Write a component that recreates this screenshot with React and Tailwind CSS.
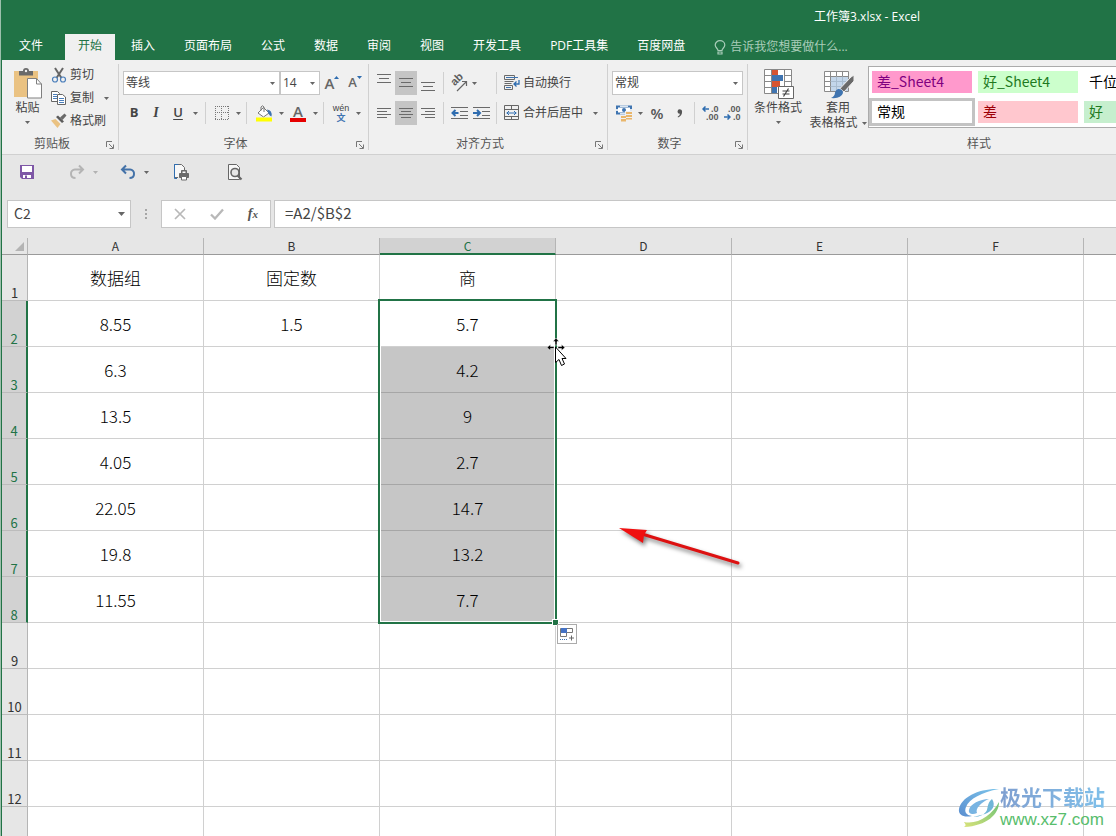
import React from 'react';

/* ---------- small shared parts ---------- */

function Caret({ className = '' }) {
  return (
    <svg className={'shrink-0 ' + className} width="5" height="3" viewBox="0 0 5 3" aria-hidden="true">
      <path d="M0 0h5L2.5 3z" fill="#666" />
    </svg>
  );
}

function CaretButton({ label }) {
  return (
    <button aria-label={label} className="flex h-6 w-2 shrink-0 items-center justify-center">
      <Caret />
    </button>
  );
}

function Tool({ label, className = 'w-[22px]', children }) {
  return (
    <button aria-label={label} className={'flex h-6 shrink-0 items-center justify-center ' + className}>
      {children}
    </button>
  );
}

function Divider() {
  return <span className="mx-1 h-[22px] w-px shrink-0 bg-[#d0d0d0]" />;
}

function Group({ title, launcher = true, className = '', children }) {
  return (
    <section className={'flex shrink-0 flex-col ' + className}>
      <div className="h-[72px]">{children}</div>
      <div className="flex h-[14px] items-center">
        <h2 className="flex-1 pt-[2px] text-center text-xs leading-[14px] text-[#555]">{title}</h2>
        <span className="flex w-4 justify-center pt-1">
          {launcher && (
            <button aria-label={title + '设置'}>
              <svg width="8" height="8" viewBox="0 0 8 8" fill="none" stroke="#777">
                <path d="M.5 6V.5H6M3 3l4 4M7.500 3.500V7.500H3.500" />
              </svg>
            </button>
          )}
        </span>
      </div>
    </section>
  );
}

function Picker({ label, value, className = '' }) {
  return (
    <label className={'relative flex h-6 items-center ' + className}>
      <select
        aria-label={label}
        className="h-6 w-full appearance-none border border-[#c6c6c6] bg-white pl-[2px] text-xs text-[#444] outline-none"
      >
        <option>{value}</option>
      </select>
      <Caret className="pointer-events-none absolute right-[5px]" />
    </label>
  );
}

/* ---------- icons ---------- */

const PasteIcon = () => (
  <svg width="30" height="31" viewBox="0 0 30 31">
    <path d="M1 3h24v26H1z" fill="#EAC282" />
    <path d="M6 3h4a3 3 0 0 1 6 0h4v4.500H6z" fill="#6a6a6a" />
    <circle cx="13" cy="3" r="1.200" fill="#f0f0f0" />
    <path d="M14.500 10.500h9l5 5.500v14h-14z" fill="#fff" stroke="#808080" />
    <path d="M23.500 10.500v5.500h5" fill="none" stroke="#808080" />
  </svg>
);

const CutIcon = () => (
  <svg width="16" height="16" viewBox="0 0 16 16" fill="none">
    <path d="M4 1l6.500 10M12 1L5.500 11" stroke="#666" strokeWidth="2" />
    <circle cx="4" cy="12.500" r="2.500" stroke="#4a7ebb" strokeWidth="1.200" />
    <circle cx="12" cy="12.500" r="2.500" stroke="#4a7ebb" strokeWidth="1.200" />
  </svg>
);

const CopyIcon = () => (
  <svg width="16" height="16" viewBox="0 0 16 16" fill="#fff" stroke="#666">
    <path d="M.5 1.500h6l2 2v8h-8z" />
    <path d="M2 4.500h4M2 6.500h4M2 8.500h4" stroke="#4a7ebb" />
    <path d="M6.500 4.500h5l3 2.500v7.500H6.500z" />
    <path d="M8 8.500h5M8 10.500h5M8 12.500h5" stroke="#4a7ebb" />
  </svg>
);

const PainterIcon = () => (
  <svg width="16" height="16" viewBox="0 0 16 16">
    <path d="M0 7.500l4.500-1.500 5 5L6.500 15z" fill="#EAC282" />
    <path d="M5 4l2-1.500 6 6-2 1.500z" fill="#5c5c5c" />
    <path d="M9 4.500l4.500-4 2 2-4 4.500z" fill="#6a6a6a" />
  </svg>
);

const BorderIcon = () => (
  <svg width="14" height="14" viewBox="0 0 14 14" stroke="#777" strokeDasharray="1 1">
    <path d="M0 .5h14M0 6.500h14M0 13.500h14M.5 0v14M6.500 0v14M13.500 0v14" />
  </svg>
);

const BucketIcon = () => (
  <svg width="18" height="17" viewBox="0 0 18 17" fill="none">
    <path d="M3 8l5.500-5.500L14 8l-5.500 4z" fill="#fff" stroke="#777" />
    <path d="M6 5.500V2Q7.500-.5 9 2v5" stroke="#777" />
    <path d="M12 4.500q5.500.5 4.500 7Q13.500 10.500 12 4.500z" fill="#3f74b0" />
    <path d="M1 12.500h16v4H1z" fill="#ffff00" />
  </svg>
);

function LinesIcon({ rows, y }) {
  return (
    <svg width="14" height="22" viewBox="0 0 14 22" stroke="#6a6a6a">
      {rows.map(([a, b], i) => (
        <path key={i} d={`M${a} ${y + i * (rows.length === 3 ? 4 : 3)}.5H${b}`} />
      ))}
    </svg>
  );
}

function OrientationIcon() {
  return (
    <span className="relative flex h-[18px] w-[18px] items-center">
      <span className="-mt-2 -rotate-45 font-['Liberation_Sans',sans-serif] text-[11px] leading-3 font-bold text-[#5c5c5c]">ab</span>
      <svg className="absolute right-0 bottom-0" width="12" height="12" viewBox="0 0 12 12" fill="none" stroke="#666">
        <path d="M1 11l9.500-9.500M6 1.500h4.500V6" strokeWidth="1.200" />
      </svg>
    </span>
  );
}

function IndentIcon({ out }) {
  return (
    <svg width="17" height="14" viewBox="0 0 17 14" fill="none">
      <path d="M0 1.500h17M9 5.500h8M9 9.500h8M0 12.500h17" stroke="#6a6a6a" />
      <path
        d={out ? 'M7.500 7H2M4.500 4L1.500 7l3 3' : 'M0 7h6M4 4l3 3-3 3'}
        stroke="#2f6db0"
        strokeWidth="2"
      />
    </svg>
  );
}

const WrapIcon = () => (
  <svg width="16" height="16" viewBox="0 0 16 16" fill="none">
    <path d="M.5.5h10v4H.5zM.5 6.500h9M.5 8.500h7M.5 10.500h8v4h-8z" stroke="#6a6a6a" />
    <path d="M2 2.500h12M2 12.500h5" stroke="#3f74b0" />
    <path d="M15 5v4H10.500M12.500 6.500L10 9l2.500 2.500" stroke="#2f6db0" strokeWidth="1.300" />
  </svg>
);

const MergeIcon = () => (
  <svg width="16" height="16" viewBox="0 0 16 16" fill="none">
    <path d="M.5.5h14v14H.5zM.5 4.500h14M.5 11.500h14M7.500.5v4M7.500 11.500v3" stroke="#666" />
    <path d="M2.500 8h10M5 6L3 8l2 2M10 6l2 2-2 2" stroke="#2f6db0" />
  </svg>
);

const CurrencyIcon = () => (
  <svg width="17" height="17" viewBox="0 0 17 17">
    <path d="M1 1.500h14v7H1z" fill="#fff" stroke="#3f74b0" strokeWidth="2" />
    <path d="M4 .5h8v1.500H4zM4 8h8v1.500H4zM0 4h2v2H0zM14 4h2v2h-2z" fill="#dbe6f2" />
    <circle cx="8" cy="5" r="2" fill="#3f74b0" />
    <path d="M9 6h8v9H9zM4 10h7v7H4z" fill="#f0f0f0" />
    <path d="M10 7h6v2h-6zM10 10h6v2h-6zM10 13h6v1.500h-6zM5 11h5v2H5zM5 14h5v2.500H5z" fill="#E9B66B" />
  </svg>
);

function DecimalIcon({ add }) {
  const arrow = (
    <svg width="7" height="6" viewBox="0 0 7 6" fill="none" stroke="#2f6db0" strokeWidth="1.500" aria-hidden="true">
      <path d={add ? 'M7 3H1M3.500.5L1 3l2.500 2.500' : 'M0 3h6M3.500.5L6 3 3.500 5.500'} />
    </svg>
  );
  return (
    <span className="flex w-[17px] flex-col items-end font-['Liberation_Sans',sans-serif] text-[9px] leading-[8px] font-bold text-[#5c5c5c]">
      <span className="flex items-center gap-[2px]">{add && arrow}{add ? '.0' : '.00'}</span>
      <span className="flex items-center gap-[2px]">{!add && arrow}{add ? '.00' : '.0'}</span>
    </span>
  );
}

const ConditionalIcon = () => (
  <svg width="31" height="31" viewBox="0 0 31 31" fill="none">
    <path d="M1.500 1.500h27v24h-27z" fill="#fff" />
    <path d="M9 1h6v6H9z" fill="#D65532" />
    <path d="M9 7h11v6H9z" fill="#3f74b0" />
    <path d="M9 13h8v6H9z" fill="#D65532" />
    <path d="M9 19h5v6H9z" fill="#3f74b0" />
    <path d="M1.500 1.500h27v24h-27zM1.500 7.500h7M21 7.500h7M1.500 13.500h7M21 13.500h7M1.500 19.500h7M8.500 1.500v24M21.500 1.500v24" stroke="#888" />
    <path d="M15.500 18.500h15v12h-15z" fill="#fff" stroke="#666" />
    <path d="M19.500 23h7M19.500 26h7M25.500 20.500l-5 8" stroke="#444" strokeWidth="1.200" />
  </svg>
);

const TableFormatIcon = () => (
  <svg width="31" height="31" viewBox="0 0 31 31" fill="none">
    <path d="M1.500 3.500h24v20h-24z" fill="#fff" />
    <path d="M7 8h19v15H7z" fill="#C3D6EA" />
    <path d="M1.500 3.500h24v20h-24zM1.500 8.500h24M1.500 13.500h7M1.500 18.500h7M7.500 3.500v20M13.500 3.500v5M19.500 3.500v5" stroke="#8a8a8a" />
    <path d="M13.500 8.500v15M19.500 8.500v15M7.500 13.500h18M7.500 18.500h18" stroke="#a9bccf" />
    <path d="M31 7v6L21 24l-4-3.500L28 9z" fill="#6a6a6a" stroke="#f0f0f0" />
    <path d="M15 21q5 0 5 4-2 6-12 5 4-2 4-5.500 1-3 3-3.500z" fill="#3f74b0" />
  </svg>
);

const SaveIcon = () => (
  <svg width="16" height="16" viewBox="0 0 16 16">
    <path d="M1 1h14v14H3l-2-2z" fill="#7E57A6" />
    <path d="M3 2h10v6H3zM4 11h8v3H4z" fill="#fff" />
    <path d="M6 11.500h2v2.500H6z" fill="#7E57A6" />
  </svg>
);

function TurnIcon({ color, flip }) {
  return (
    <svg width="16" height="16" viewBox="0 0 16 16" fill="none" stroke={color} strokeWidth="2">
      <g transform={flip ? 'matrix(-1 0 0 1 16 0)' : undefined}>
        <path d="M2 5.500h8a4 4 0 0 1 4 4.500c0 2.500-2 4-4.500 4M6 1.500l-4 4 4 4" />
      </g>
    </svg>
  );
}

const QuickPrintIcon = () => (
  <svg width="17" height="17" viewBox="0 0 17 17" fill="none" stroke="#6a6a6a">
    <path d="M5 13.500H1.500V.5h7l3 3V7" fill="#f7f7f7" />
    <path d="M4 14.500H1.500V.5h4" stroke="#2f6db0" />
    <path d="M8.500 9V6.500h5V9M6.500 9.500h9v4h-9z" fill="#6a6a6a" />
    <path d="M8.500 12.500h5v3.500h-5z" fill="#fff" />
    <path d="M9.500 7.500h3V9h-3z" fill="#fff" stroke="none" />
  </svg>
);

const PreviewIcon = () => (
  <svg width="16" height="17" viewBox="0 0 16 17" fill="none" stroke="#666">
    <path d="M1.500.5h8l3 3V15.500h-11z" fill="#f7f7f7" />
    <circle cx="8" cy="8.500" r="4" strokeWidth="1.600" fill="#e6e6e6" />
    <path d="M10.500 11.500l4 4" strokeWidth="2.200" />
  </svg>
);

const BulbIcon = () => (
  <svg width="12" height="15" viewBox="0 0 12 15" fill="none" stroke="#a9cdb9" strokeWidth="1.200">
    <path d="M4 10.500c0-2-2.800-2.700-2.800-5.500a4.800 4.300 0 0 1 9.600 0c0 2.800-2.800 3.500-2.800 5.500zM4 12h4v2H4z" />
  </svg>
);

const WatermarkLogo = () => (
  <svg width="42" height="40" viewBox="0 0 42 40">
    <defs>
      <linearGradient id="sky" x1="0" y1="1" x2="1" y2="0">
        <stop offset="0" stopColor="#5b8fd0" />
        <stop offset="1" stopColor="#7cc4ea" />
      </linearGradient>
      <linearGradient id="leaf" x1="0" y1="1" x2="1" y2="0">
        <stop offset="0" stopColor="#d9e27a" />
        <stop offset="1" stopColor="#6cc276" />
      </linearGradient>
    </defs>
    <path d="M41 1C22 0 3 9 1 21c-1 6 5 9 13 7-6-1-8-4-6-9C11 11 24 4 41 1z" fill="url(#sky)" />
    <path d="M31 11c-9 0-19 5-20 11-1 4 4 5 8 3-2-4 4-11 12-14z" fill="#78b4e2" />
    <path d="M34 11c4 6 1 12-7 15l-12 3c8 0 12-3 14-7 1-4 1-8 5-11z" fill="#6fb6d8" />
    <path d="M41 14c0 12-12 24-35 25 3-2 1-3 0-5 14 3 28-7 35-20z" fill="url(#leaf)" />
  </svg>
);

/* ---------- ribbon ---------- */

const TABS = ['插入', '页面布局', '公式', '数据', '审阅', '视图', '开发工具', 'PDF工具集', '百度网盘'];

function TitleBar() {
  return (
    <header className="bg-[#217346] text-xs text-white">
      <div className="flex h-[34px] items-center justify-end pr-[196px]">
        <h1 className="leading-4">工作簿3.xlsx - Excel</h1>
      </div>
      <nav className="flex h-[26px] gap-[3px] whitespace-nowrap">
        <button className="w-[60px] pr-[2px] pb-[2px]">文件</button>
        <button className="bg-[#f0f0f0] px-[13px] pb-[2px] text-[#217346]">开始</button>
        {TABS.map((t) => (
          <button key={t} className="px-[13px] pb-[2px]">{t}</button>
        ))}
        <button className="flex items-center gap-1 pl-[13px] text-[#a9cdb9]">
          <BulbIcon />
          告诉我您想要做什么...
        </button>
      </nav>
    </header>
  );
}

const SPREAD = [[0, 14], [2, 12], [0, 14]];

function Ribbon() {
  return (
    <div className="flex overflow-hidden border-b border-[#d0d0d0] bg-[#f0f0f0] py-1 text-xs whitespace-nowrap text-[#444]">
      <Group title="剪贴板" className="w-[117px] border-r border-[#d0d0d0]">
        <div className="flex">
          <button className="flex w-[49px] flex-col items-center pt-[4px] pl-[2px]">
            <PasteIcon />
            <span className="leading-[18px]">粘贴</span>
            <Caret className="mt-1" />
          </button>
          <div className="flex flex-col">
            <button className="flex h-[22px] items-center gap-[3px]"><CutIcon />剪切</button>
            <div className="flex h-6 items-center">
              <button className="flex items-center gap-[3px]"><CopyIcon />复制</button>
              <button aria-label="复制选项" className="ml-2 flex w-2 justify-center"><Caret /></button>
            </div>
            <button className="flex h-[22px] items-center gap-[3px]"><PainterIcon />格式刷</button>
          </div>
        </div>
      </Group>

      <Group title="字体" className="w-[250px] border-r border-[#d0d0d0]">
        <div className="flex flex-col gap-[6px] pt-[7px] pl-1">
          <div className="flex items-center">
            <Picker label="字体名称" value="等线" className="w-[157px]" />
            <Picker label="字号" value="14" className="w-10" />
            <Tool label="增大字号" className="w-6">
              <span className="text-[15px] font-semibold text-[#666]">A</span>
              <svg className="mb-3" width="5" height="3" viewBox="0 0 5 3"><path d="M0 3h5L2.500 0z" fill="#2f6db0" /></svg>
            </Tool>
            <Tool label="减小字号">
              <span className="text-[13px] font-semibold text-[#666]">A</span>
              <svg className="mb-3" width="5" height="3" viewBox="0 0 5 3"><path d="M0 0h5L2.500 3z" fill="#2f6db0" /></svg>
            </Tool>
          </div>
          <div className="flex items-center">
            <Tool label="加粗"><b className="text-[13px]">B</b></Tool>
            <Tool label="倾斜"><i className="font-['Liberation_Serif',serif] text-sm font-bold">I</i></Tool>
            <Tool label="下划线"><span className="text-[13px] font-semibold underline underline-offset-2">U</span></Tool>
            <button aria-label="下划线选项" className="flex h-6 w-3 items-center justify-center"><Caret /></button>
            <Divider />
            <Tool label="边框" className="w-6"><BorderIcon /></Tool>
            <CaretButton label="边框选项" />
            <Divider />
            <Tool label="填充颜色" className="w-[26px]"><BucketIcon /></Tool>
            <CaretButton label="填充颜色选项" />
            <Tool label="字体颜色" className="w-[26px]">
              <span className="w-4 border-b-4 border-[#e60000] text-[15px] leading-[13px] font-semibold text-[#666]">A</span>
            </Tool>
            <CaretButton label="字体颜色选项" />
            <Divider />
            <Tool label="拼音" className="w-[26px] flex-col">
              <span className="font-['Liberation_Sans',sans-serif] text-[9px] leading-[9px]">wén</span>
              <span className="text-[9px] leading-[10px] font-bold text-[#3f74b0]">文</span>
            </Tool>
            <CaretButton label="拼音选项" />
          </div>
        </div>
      </Group>

      <Group title="对齐方式" className="w-[239px] border-r border-[#d0d0d0]">
        <div className="flex flex-col gap-[6px] pt-[7px] pl-1">
          <div className="flex items-center">
            <Tool label="顶端对齐"><LinesIcon y={2} rows={SPREAD} /></Tool>
            <Tool label="垂直居中" className="w-[22px] bg-[#c5c5c5]"><LinesIcon y={6} rows={SPREAD} /></Tool>
            <Tool label="底端对齐"><LinesIcon y={10} rows={SPREAD} /></Tool>
            <Divider />
            <div className="flex w-11">
              <Tool label="方向"><OrientationIcon /></Tool>
              <CaretButton label="方向选项" />
            </div>
            <Divider />
            <button className="flex items-center gap-[3px] pl-[3px]"><WrapIcon />自动换行</button>
          </div>
          <div className="flex items-center">
            <Tool label="左对齐"><LinesIcon y={6} rows={[[0, 14], [0, 10], [0, 14], [0, 10]]} /></Tool>
            <Tool label="居中" className="w-[22px] bg-[#c5c5c5]"><LinesIcon y={6} rows={[[0, 14], [2, 12], [0, 14], [2, 12]]} /></Tool>
            <Tool label="右对齐"><LinesIcon y={6} rows={[[0, 14], [4, 14], [0, 14], [4, 14]]} /></Tool>
            <Divider />
            <Tool label="减少缩进量"><IndentIcon out /></Tool>
            <Tool label="增加缩进量"><IndentIcon /></Tool>
            <Divider />
            <button className="flex items-center gap-[3px] pr-2 pl-[3px]"><MergeIcon />合并后居中</button>
            <CaretButton label="合并选项" />
          </div>
        </div>
      </Group>

      <Group title="数字" className="w-[140px] border-r border-[#d0d0d0]">
        <div className="flex flex-col gap-[6px] pt-[7px] pl-1">
          <Picker label="数字格式" value="常规" className="w-[131px]" />
          <div className="flex items-center">
            <Tool label="会计数字格式" className="w-6"><CurrencyIcon /></Tool>
            <CaretButton label="会计格式选项" />
            <Tool label="百分比样式" className="w-[26px]"><span className="text-[15px] font-semibold text-[#555]">%</span></Tool>
            <Tool label="千位分隔样式" className="w-5">
              <svg width="6" height="9" viewBox="0 0 6 9"><path d="M.5 2.500a2.200 2.200 0 1 1 4.600.3Q5 7 1 8.500l-.3-.8Q3 6.500 3 4.800.5 5 .5 2.500z" fill="#555" /></svg>
            </Tool>
            <Divider />
            <Tool label="增加小数位数"><DecimalIcon add /></Tool>
            <Tool label="减少小数位数"><DecimalIcon /></Tool>
          </div>
        </div>
      </Group>

      <Group title="样式" launcher={false} className="min-w-[478px] flex-1">
        <div className="flex">
          <button className="flex w-[60px] flex-col items-center pt-[4px]">
            <ConditionalIcon />
            <span className="leading-[18px]">条件格式</span>
            <Caret className="mt-1" />
          </button>
          <button className="flex w-[60px] flex-col items-center pt-[4px]">
            <TableFormatIcon />
            <span className="leading-[18px]">套用</span>
            <span className="flex items-center gap-1 leading-3">表格格式<Caret /></span>
          </button>
          <div className="mt-[2px] grid h-[62px] flex-1 auto-cols-[106px] grid-flow-col grid-rows-2 overflow-hidden border border-[#ababab] bg-white font-['Noto_Sans_CJK_SC',sans-serif] text-sm">
            <StyleSwatch className="bg-[#ff99cc] text-[#800080]">差_Sheet4</StyleSwatch>
            <button className="my-[1px] flex items-center border-[3px] border-[#c3c3c3] bg-white pb-[2px] pl-[5px] text-black">常规</button>
            <StyleSwatch className="bg-[#ccffcc] text-[#1f7a1f]">好_Sheet4</StyleSwatch>
            <StyleSwatch className="bg-[#ffc7ce] text-[#9c0006]">差</StyleSwatch>
            <StyleSwatch className="text-black">千位分隔</StyleSwatch>
            <StyleSwatch className="bg-[#c6efce] text-[#1f7a1f]">好</StyleSwatch>
          </div>
        </div>
      </Group>
    </div>
  );
}

function StyleSwatch({ className, children }) {
  return <button className={'mx-[3px] my-1 flex items-center overflow-hidden pb-[2px] pl-[5px] ' + className}>{children}</button>;
}

function QuickAccess() {
  return (
    <div className="flex h-[34px] items-center pl-[17px]">
      <button aria-label="保存"><SaveIcon /></button>
      <button aria-label="恢复" className="ml-[34px]"><TurnIcon color="#b4b4b4" flip /></button>
      <button aria-label="恢复选项" className="ml-2 opacity-40"><Caret /></button>
      <button aria-label="撤消" className="ml-[22px]"><TurnIcon color="#4472a8" /></button>
      <button aria-label="撤消选项" className="ml-2"><Caret /></button>
      <button aria-label="快速打印" className="ml-[24px]"><QuickPrintIcon /></button>
      <button aria-label="打印预览" className="ml-[37px]"><PreviewIcon /></button>
    </div>
  );
}

function FormulaBar() {
  return (
    <div className="mt-[11px] flex h-7 font-['Noto_Sans_CJK_SC',sans-serif] text-[#444]">
      <label className="relative ml-[5px] flex w-[124px] items-center">
        <input
          aria-label="名称框"
          defaultValue="C2"
          className="h-7 w-full border border-[#c6c6c6] bg-white pb-[2px] pl-[6px] text-sm outline-none"
        />
        <svg className="pointer-events-none absolute right-[6px]" width="7" height="4" viewBox="0 0 7 4"><path d="M0 0h7L3.500 4z" fill="#666" /></svg>
      </label>
      <div className="flex w-[30px] items-center justify-center">
        <svg width="2" height="11" viewBox="0 0 2 11"><path d="M0 0h2v2H0zM0 4h2v2H0zM0 8h2v2H0z" fill="#a6a6a6" /></svg>
      </div>
      <div className="flex w-[110px] items-center justify-around border border-[#c6c6c6] bg-white">
        <button aria-label="取消">
          <svg width="12" height="12" viewBox="0 0 12 12" stroke="#b8b8b8" strokeWidth="1.700"><path d="M1 1l10 10M11 1L1 11" /></svg>
        </button>
        <button aria-label="输入">
          <svg width="14" height="12" viewBox="0 0 14 12" fill="none" stroke="#b8b8b8" strokeWidth="2.300"><path d="M1 6.500l4 4L13 1.500" /></svg>
        </button>
        <button aria-label="插入函数" className="font-['Liberation_Serif',serif] text-sm leading-4 font-bold text-[#555] italic">
          f<span className="text-[11px]">x</span>
        </button>
      </div>
      <input
        aria-label="编辑栏"
        defaultValue="=A2/$B$2"
        className="ml-[3px] min-w-0 flex-1 border border-r-0 border-[#c6c6c6] bg-white pb-[2px] pl-[10px] text-[15px] outline-none"
      />
    </div>
  );
}

/* ---------- sheet ---------- */

const COLUMNS = ['A', 'B', 'C', 'D', 'E', 'F', 'G'];
const CELLS = [
  ['数据组', '固定数', '商'],
  ['8.55', '1.5', '5.7'],
  ['6.3', '', '4.2'],
  ['13.5', '', '9'],
  ['4.05', '', '2.7'],
  ['22.05', '', '14.7'],
  ['19.8', '', '13.2'],
  ['11.55', '', '7.7'],
  [], [], [], [], [],
];

function cellClass(row, col) {
  if (col === 2 && row >= 2 && row <= 7) {
    return 'border-b-[#a6a6a6] border-r-[#d0d0d0] bg-[#c6c6c6]';
  }
  return 'border-[#d0d0d0]';
}

function Sheet() {
  return (
    <div className="relative mt-[10px] min-h-0 flex-1 overflow-hidden bg-white font-['Noto_Sans_CJK_SC',sans-serif]">
      <table className="w-[1258px] table-fixed border-separate border-spacing-0">
        <thead>
          <tr className="h-[17px] bg-[#e6e6e6] text-xs leading-4 text-[#333]">
            <th className="w-[26px] border-r border-b border-r-[#b5b5b5] border-b-[#9a9a9a] p-0">
              <svg className="mr-[3px] ml-auto" width="9" height="9" viewBox="0 0 9 9" aria-hidden="true"><path d="M9 0v9H0z" fill="#b4b4b4" /></svg>
            </th>
            {COLUMNS.map((c) => (
              <th
                key={c}
                scope="col"
                className={
                  'w-[176px] border-r border-r-[#b5b5b5] p-0 font-normal ' +
                  (c === 'C' ? 'border-b-2 border-b-[#217346] bg-[#d2d2d2] leading-[15px] text-[#217346]' : 'border-b border-b-[#9a9a9a]')
                }
              >
                {c}
              </th>
            ))}
          </tr>
        </thead>
        <tbody>
          {CELLS.map((row, r) => (
            <tr key={r} className="h-[46px]">
              <th
                scope="row"
                className={
                  'border-b border-b-[#bcbcbc] p-0 align-bottom text-[13px] leading-[14px] font-normal ' +
                  (r >= 1 && r <= 7
                    ? 'border-r-2 border-r-[#217346] bg-[#d2d2d2] text-[#217346]'
                    : 'border-r border-r-[#b5b5b5] bg-[#e6e6e6] text-[#333]')
                }
              >
                {r + 1}
              </th>
              {COLUMNS.map((c, i) => (
                <td
                  key={c}
                  className={'border-r border-b p-0 text-center text-[17px] leading-6 font-light text-black ' + cellClass(r, i)}
                >
                  {row[i]}
                </td>
              ))}
            </tr>
          ))}
        </tbody>
      </table>

      {/* selected range C2:C8 */}
      <div className="pointer-events-none absolute top-[61px] left-[376px] h-[325px] w-[179px] border-2 border-[#217346]">
        <div className="h-full border border-white" />
        <span className="absolute -right-1 -bottom-1 h-[7px] w-[7px] border border-white bg-[#217346]" />
      </div>

      <button
        aria-label="自动填充选项"
        className="absolute top-[386px] left-[555px] flex h-5 w-5 items-center justify-center border border-[#ababab] bg-white"
      >
        <svg width="14" height="14" viewBox="0 0 14 14" fill="none">
          <path d="M.5 1.500h12v4H.5zM.5 5.500h6v4h-6z" stroke="#777" />
          <path d="M1 1h6v5H1z" fill="#4472c4" />
          <path d="M0 12.500h7" stroke="#3f74b0" strokeDasharray="1 1" />
          <path d="M9 11h5M11.500 8.500v5" stroke="#666" />
        </svg>
      </button>

      {/* move pointer */}
      <svg className="pointer-events-none absolute top-[100px] left-[545px]" width="20" height="29" viewBox="0 0 20 29">
        <path d="M9 0l3 3.500h-2V7H8V3.500H6zM0 9.500l3.500-3v2H7v2H3.500v2zM18 9.500l-3.500-3v2H11v2h3.500v2z" fill="#000" stroke="#fff" strokeWidth=".5" />
        <path d="M8.500 9v15.500l3.500-3 2.500 6 3-1.500-2.500-5.500h4z" fill="#fff" stroke="#000" />
      </svg>

      {/* annotation arrow */}
      <svg
        className="pointer-events-none absolute top-[282px] left-[610px] drop-shadow-[2px_3px_2px_rgba(0,0,0,0.5)]"
        width="136"
        height="56"
        viewBox="0 0 136 56"
      >
        <path d="M30 14L126 43" stroke="#dd1111" strokeWidth="3" strokeLinecap="round" />
        <path d="M7 8l28 2-3 5-1 8z" fill="#f01010" />
      </svg>
    </div>
  );
}

function Watermark() {
  return (
    <div className="pointer-events-none absolute right-[11px] bottom-[6px] flex items-center font-['Liberation_Sans','Noto_Sans_CJK_SC',sans-serif]">
      <WatermarkLogo />
      <div className="flex flex-col">
        <span className="bg-gradient-to-r from-[#7f9fd0] to-[#7fc0ea] bg-clip-text text-[21px] leading-6 font-bold text-transparent">极光下载站</span>
        <span className="text-[17px] leading-5 text-[#58bd6c]">www.xz7.com</span>
      </div>
    </div>
  );
}

export default function App() {
  return (
    <div className="relative h-screen overflow-hidden border-l border-[#9dbfac] font-['Open_Sans','Noto_Sans_CJK_SC',sans-serif]">
      <div className="flex h-full flex-col border-l border-[#217346] bg-[#e6e6e6]">
        <TitleBar />
        <Ribbon />
        <QuickAccess />
        <FormulaBar />
        <Sheet />
      </div>
      <Watermark />
    </div>
  );
}
